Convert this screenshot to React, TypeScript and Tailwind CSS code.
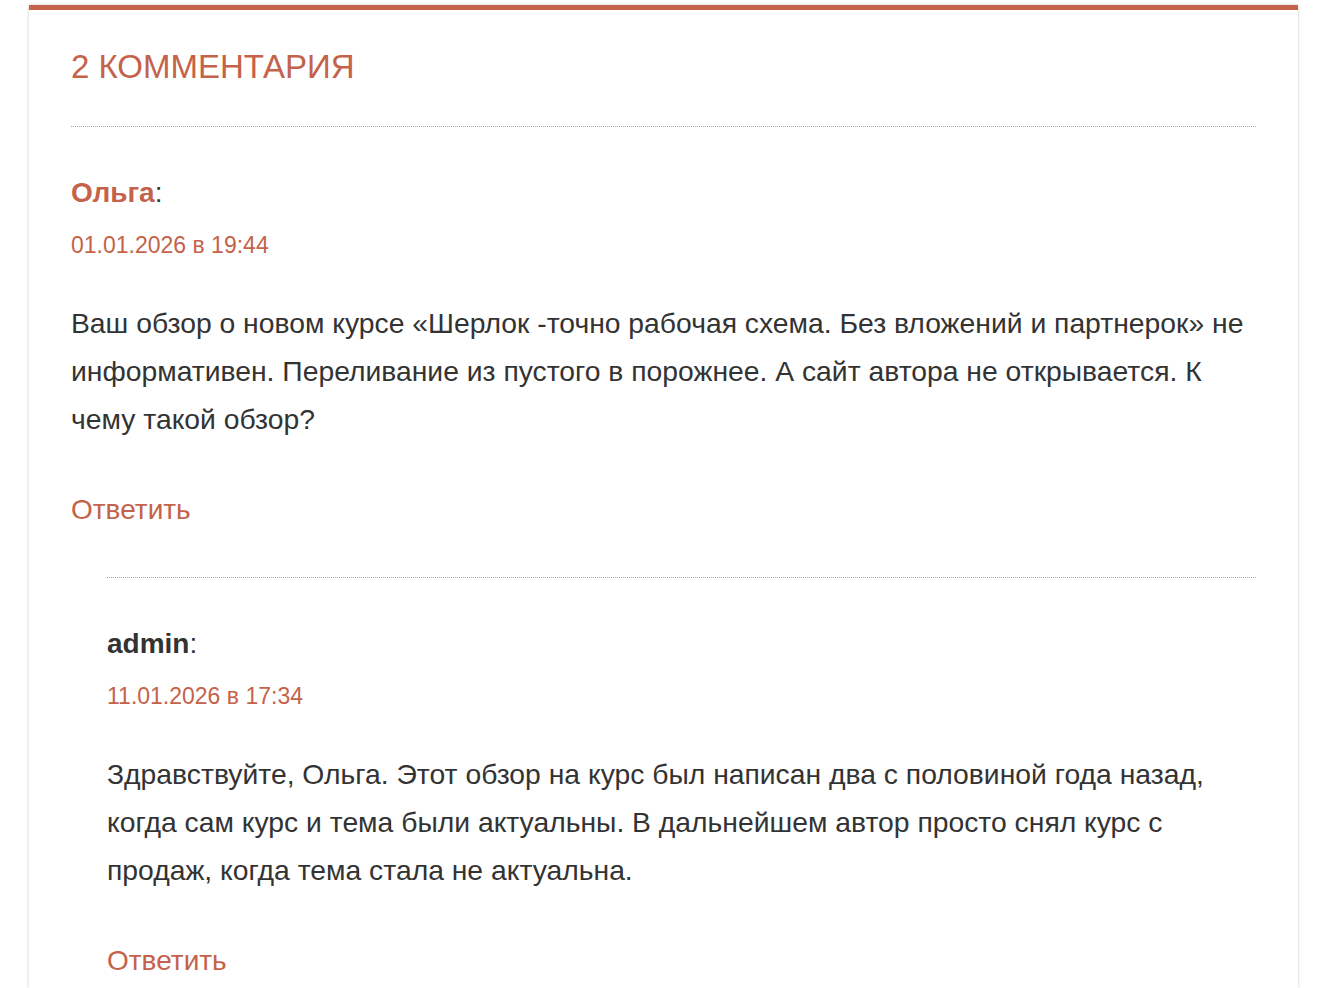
import React from 'react';

const accent = 'text-[#c4624a]';

type CommentProps = {
  author: string;
  authorLink?: boolean;
  date: string;
  text: string;
  children?: React.ReactNode;
};

const Comment = ({ author, authorLink, date, text, children }: CommentProps) => {
  return (
    <div className="border-t border-dotted border-[#a8a8a8] pt-[42px]">
      <div className="h-[48px] leading-[48px] text-[28px] text-[#333]">
        <span className={`font-bold ${authorLink ? accent : 'text-[#333]'}`}>{author}</span>:
      </div>
      <div className={`mt-[12px] h-[32px] leading-[32px] text-[23px] ${accent}`}>{date}</div>
      <p className="mt-[38px] text-[28.3px] leading-[48px] text-[#333]">{text}</p>
      <div className={`mt-[43px] h-[48px] leading-[48px] text-[28px] ${accent}`}>Ответить</div>
      {children && <div className="mt-[43px] pl-[36px]">{children}</div>}
    </div>
  );
};

const App = () => {
  return (
    <div className="min-h-screen bg-white pt-[5px] font-['Liberation_Sans',Arial,sans-serif]">
      <div className="ml-[29px] w-[1269px] min-h-[983px] border-t-[5px] border-[#c4624a] bg-white px-[42px] pt-[38px] shadow-[0_0_3px_rgba(0,0,0,0.22)]">
        <h2 className={`h-[38px] leading-[38px] text-[33px] font-normal ${accent}`}>2 КОММЕНТАРИЯ</h2>
        <div className="mt-[40px]">
          <Comment
            author="Ольга"
            authorLink
            date="01.01.2026 в 19:44"
            text="Ваш обзор о новом курсе «Шерлок -точно рабочая схема. Без вложений и партнерок» не информативен. Переливание из пустого в порожнее. А сайт автора не открывается. К чему такой обзор?"
          >
            <Comment
              author="admin"
              date="11.01.2026 в 17:34"
              text="Здравствуйте, Ольга. Этот обзор на курс был написан два с половиной года назад, когда сам курс и тема были актуальны. В дальнейшем автор просто снял курс с продаж, когда тема стала не актуальна."
            />
          </Comment>
        </div>
      </div>
    </div>
  );
};

export default App;
